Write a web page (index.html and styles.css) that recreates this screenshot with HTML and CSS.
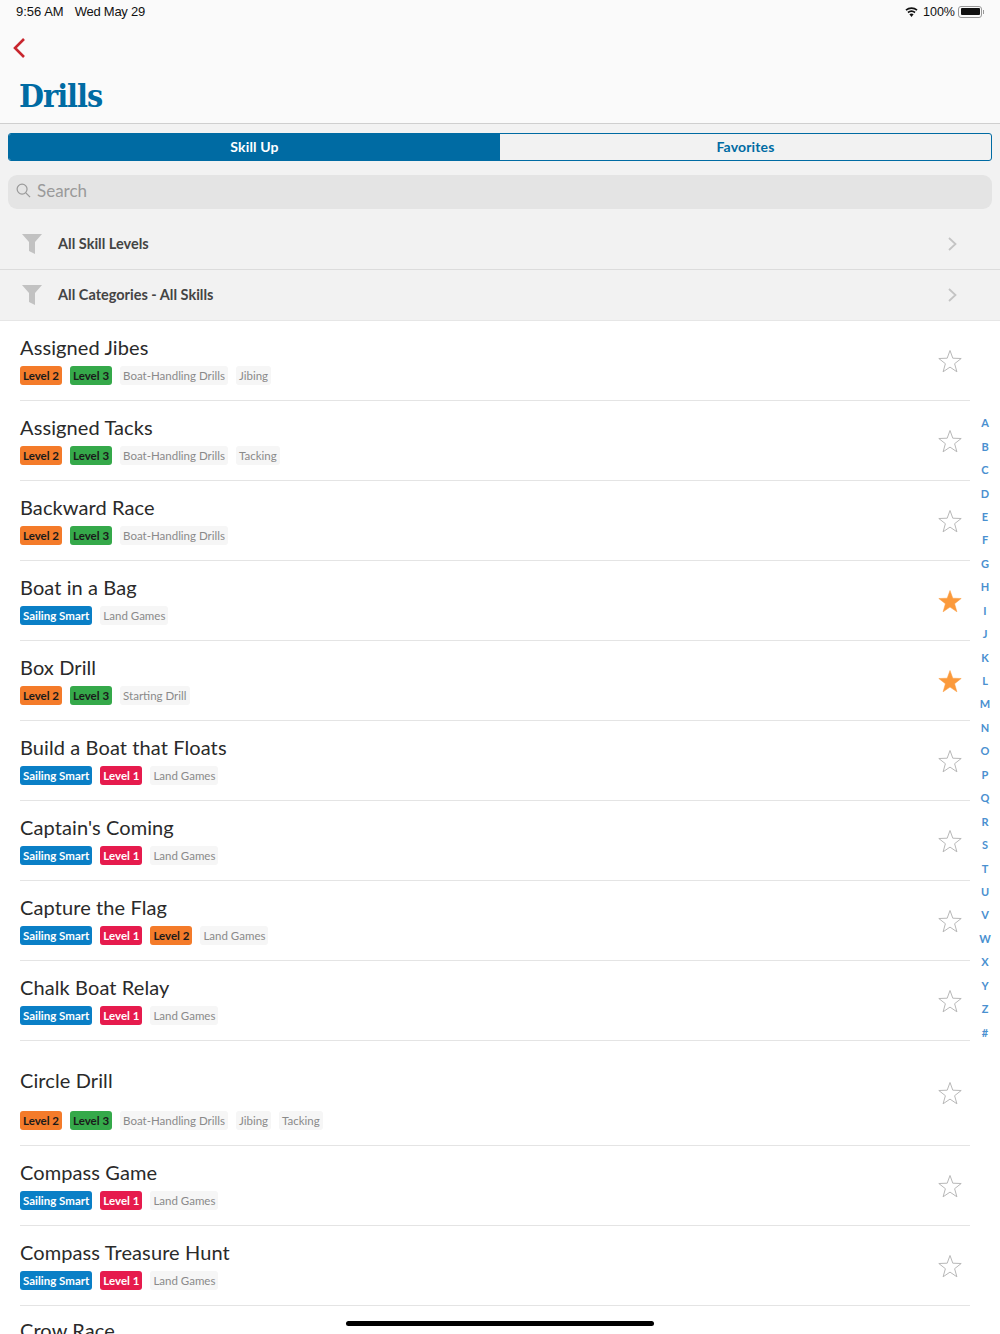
FILE: index.html
```html
<!DOCTYPE html>
<html>

<head>
    <title>Drills</title>
    <meta charset="utf-8">
    <meta name="viewport" content="width=device-width, initial-scale=1.0">
    <link rel="stylesheet" href="styles.css">
</head>

<body>
    <svg class="defs" width="0" height="0">
        <symbol id="star" viewBox="0 0 24 24">
            <path d="M12 1.500l2.800 7.700 8.400.3-6.600 5.200 2.300 8.100-6.900-4.700-6.900 4.700 2.300-8.100L.8 9.500l8.400-.3z" />
        </symbol>
        <symbol id="funnel" viewBox="0 0 20 20">
            <path d="M0 0h20l-7 8v12l-6-3V8z" />
        </symbol>
        <symbol id="chevron" viewBox="0 0 10 14">
            <path d="M2 1L8.500 7 2 13" />
        </symbol>
    </svg>

    <header class="top">
        <div class="status">
            <span class="time">9:56 AM</span>
            <span class="date">Wed May 29</span>
            <span class="status-right">
                <svg class="wifi" viewBox="0 0 16 12" width="15" height="11">
                    <path d="M8 12l-2.300-2.900a3.600 3.600 0 0 1 4.600 0z" />
                    <path d="M4.700 7.800a5.200 5.200 0 0 1 6.600 0l1.100-1.400a7 7 0 0 0-8.800 0z" />
                    <path d="M2.500 5.100a8.700 8.700 0 0 1 11 0l1.100-1.400a10.500 10.500 0 0 0-13.200 0z" />
                </svg>
                <span>100%</span>
                <span class="battery"><span class="battery-fill"></span></span>
                <span class="battery-cap"></span>
            </span>
        </div>
        <button class="back">
            <svg viewBox="0 0 14 22" width="14" height="22">
                <path d="M12 2L3 11l9 9" />
            </svg>
        </button>
        <h1>Drills</h1>
    </header>

    <section class="controls">
        <nav class="tabs">
            <button class="tab valgt">Skill Up</button>
            <button class="tab">Favorites</button>
        </nav>
        <div class="search">
            <svg viewBox="0 0 16 16" width="15" height="15">
                <circle cx="6.500" cy="6.500" r="5.300" />
                <path d="M10.500 10.500L15 15" />
            </svg>
            <span>Search</span>
        </div>
    </section>

    <section class="filters">
        <div class="filter">
            <svg class="funnel"><use href="#funnel" /></svg>
            <span class="filter-label">All Skill Levels</span>
            <svg class="chevron"><use href="#chevron" /></svg>
        </div>
        <div class="filter">
            <svg class="funnel"><use href="#funnel" /></svg>
            <span class="filter-label">All Categories - All Skills</span>
            <svg class="chevron"><use href="#chevron" /></svg>
        </div>
    </section>

    <main class="list">
        <article class="ret">
            <div class="ret-info">
                <h2>Assigned Jibes</h2>
                <div class="tags"><span class="tag orange">Level 2</span><span class="tag green">Level 3</span><span class="tag grey">Boat-Handling Drills</span><span class="tag grey">Jibing</span></div>
            </div>
            <svg class="star"><use href="#star" /></svg>
        </article>
        <article class="ret">
            <div class="ret-info">
                <h2>Assigned Tacks</h2>
                <div class="tags"><span class="tag orange">Level 2</span><span class="tag green">Level 3</span><span class="tag grey">Boat-Handling Drills</span><span class="tag grey">Tacking</span></div>
            </div>
            <svg class="star"><use href="#star" /></svg>
        </article>
        <article class="ret">
            <div class="ret-info">
                <h2>Backward Race</h2>
                <div class="tags"><span class="tag orange">Level 2</span><span class="tag green">Level 3</span><span class="tag grey">Boat-Handling Drills</span></div>
            </div>
            <svg class="star"><use href="#star" /></svg>
        </article>
        <article class="ret">
            <div class="ret-info">
                <h2>Boat in a Bag</h2>
                <div class="tags"><span class="tag blue">Sailing Smart</span><span class="tag grey">Land Games</span></div>
            </div>
            <svg class="star on"><use href="#star" /></svg>
        </article>
        <article class="ret">
            <div class="ret-info">
                <h2>Box Drill</h2>
                <div class="tags"><span class="tag orange">Level 2</span><span class="tag green">Level 3</span><span class="tag grey">Starting Drill</span></div>
            </div>
            <svg class="star on"><use href="#star" /></svg>
        </article>
        <article class="ret">
            <div class="ret-info">
                <h2>Build a Boat that Floats</h2>
                <div class="tags"><span class="tag blue">Sailing Smart</span><span class="tag red">Level 1</span><span class="tag grey">Land Games</span></div>
            </div>
            <svg class="star"><use href="#star" /></svg>
        </article>
        <article class="ret">
            <div class="ret-info">
                <h2>Captain's Coming</h2>
                <div class="tags"><span class="tag blue">Sailing Smart</span><span class="tag red">Level 1</span><span class="tag grey">Land Games</span></div>
            </div>
            <svg class="star"><use href="#star" /></svg>
        </article>
        <article class="ret">
            <div class="ret-info">
                <h2>Capture the Flag</h2>
                <div class="tags"><span class="tag blue">Sailing Smart</span><span class="tag red">Level 1</span><span class="tag orange">Level 2</span><span class="tag grey">Land Games</span></div>
            </div>
            <svg class="star"><use href="#star" /></svg>
        </article>
        <article class="ret">
            <div class="ret-info">
                <h2>Chalk Boat Relay</h2>
                <div class="tags"><span class="tag blue">Sailing Smart</span><span class="tag red">Level 1</span><span class="tag grey">Land Games</span></div>
            </div>
            <svg class="star"><use href="#star" /></svg>
        </article>
        <article class="ret ret-tall">
            <div class="ret-info">
                <h2>Circle Drill</h2>
                <div class="tags"><span class="tag orange">Level 2</span><span class="tag green">Level 3</span><span class="tag grey">Boat-Handling Drills</span><span class="tag grey">Jibing</span><span class="tag grey">Tacking</span></div>
            </div>
            <svg class="star"><use href="#star" /></svg>
        </article>
        <article class="ret">
            <div class="ret-info">
                <h2>Compass Game</h2>
                <div class="tags"><span class="tag blue">Sailing Smart</span><span class="tag red">Level 1</span><span class="tag grey">Land Games</span></div>
            </div>
            <svg class="star"><use href="#star" /></svg>
        </article>
        <article class="ret">
            <div class="ret-info">
                <h2>Compass Treasure Hunt</h2>
                <div class="tags"><span class="tag blue">Sailing Smart</span><span class="tag red">Level 1</span><span class="tag grey">Land Games</span></div>
            </div>
            <svg class="star"><use href="#star" /></svg>
        </article>
        <article class="ret ret-last">
            <div class="ret-info">
                <h2>Crow Race</h2>
            </div>
        </article>
    </main>

    <aside class="index">
        <span>A</span><span>B</span><span>C</span><span>D</span><span>E</span><span>F</span><span>G</span><span>H</span><span>I</span><span>J</span><span>K</span><span>L</span><span>M</span><span>N</span><span>O</span><span>P</span><span>Q</span><span>R</span><span>S</span><span>T</span><span>U</span><span>V</span><span>W</span><span>X</span><span>Y</span><span>Z</span><span>#</span>
    </aside>

    <div class="home-bar"></div>
</body></html>
```

FILE: styles.css
```css
* {
    box-sizing: border-box;
}

html,
body {
    margin: 0;
    height: 1334px;
    overflow: hidden;
    background: white;
    font-family: Lato, sans-serif;
}

.defs {
    position: absolute;
}

button {
    border: 0;
    padding: 0;
    background: none;
    font-family: inherit;
}

.top {
    height: 124px;
    background: #fafafa;
    border-bottom: 1px solid #cfcfcf;
}

.status {
    display: flex;
    height: 23px;
    padding: 0 16px;
    align-items: center;
    font-family: "Liberation Sans", sans-serif;
    font-size: 13px;
    color: #111;
}

.date {
    margin-left: 11px;
    letter-spacing: -.25px;
}

.status-right {
    display: flex;
    align-items: center;
    margin-left: auto;
    font-size: 12.500px;
}

.wifi {
    margin-right: 4px;
    fill: #111;
}

.battery {
    display: block;
    width: 24px;
    height: 12px;
    margin-left: 3px;
    padding: 1.500px;
    border: 1px solid #999;
    border-radius: 3px;
}

.battery-fill {
    display: block;
    height: 100%;
    background: #111;
    border-radius: 1px;
}

.battery-cap {
    width: 1px;
    height: 4px;
    margin-left: 1px;
    background: #999;
}

.back {
    display: block;
    height: 22px;
    margin: 14px 0 0 12px;
}

.back svg {
    display: block;
    fill: none;
    stroke: #c8262e;
    stroke-width: 2.600;
}

h1 {
    margin: 19px 0 0 19px;
    font-family: "DejaVu Serif", serif;
    font-size: 32px;
    line-height: 36px;
    font-weight: bold;
    font-stretch: condensed;
    letter-spacing: -1px;
    color: #006ba3;
}

.controls {
    height: 95px;
    padding: 9px 8px 0;
    background: #f2f2f2;
}

.tabs {
    display: flex;
    height: 28px;
    border: 1px solid #006ba3;
    border-radius: 3px;
    overflow: hidden;
}

.tab {
    flex: 1;
    padding-bottom: 2px;
    font-size: 14px;
    font-weight: bold;
    letter-spacing: .15px;
    color: #006ba3;
}

.valgt {
    background: #006ba3;
    color: white;
}

.search {
    display: flex;
    align-items: center;
    gap: 6px;
    height: 34px;
    margin-top: 14px;
    padding: 0 0 3px 8px;
    background: #e4e4e4;
    border-radius: 9px;
    font-size: 17px;
    color: #9a9a9a;
}

.search svg {
    fill: none;
    stroke: #9a9a9a;
    stroke-width: 1.300;
}

.filters {
    background: #f2f2f2;
    border-bottom: 1px solid #e6e6e6;
}

.filter {
    display: flex;
    align-items: center;
    height: 51px;
    padding: 0 43px 0 22px;
    border-top: 1px solid #dcdcdc;
}

.filter:first-child {
    height: 50px;
    border-top: 0;
}

.funnel {
    width: 20px;
    height: 20px;
    fill: #c2c2c2;
}

.filter-label {
    margin: 0 0 2px 16px;
    font-size: 14.500px;
    font-weight: bold;
    color: #444;
}

.chevron {
    width: 10px;
    height: 14px;
    margin-left: auto;
    fill: none;
    stroke: #c4c4c4;
    stroke-width: 1.800;
}

.list {
    padding: 0 30px 0 20px;
}

.ret {
    display: flex;
    align-items: center;
    justify-content: space-between;
    height: 80px;
    border-bottom: 1px solid #e4e4e4;
}

.ret-info {
    margin-top: -3px;
}

.ret-tall {
    height: 105px;
}

.ret-tall .ret-info {
    margin-top: 11px;
}

.ret-tall .tags {
    margin-top: 18px;
}

.ret-last {
    align-items: flex-start;
    padding-top: 14px;
}

h2 {
    margin: 0;
    font-size: 20px;
    line-height: 26px;
    font-weight: normal;
    letter-spacing: .1px;
    color: #2a2a2a;
}

.tags {
    display: flex;
    gap: 8px;
    margin-top: 6px;
}

.tag {
    height: 19px;
    padding: 0 3px;
    border-radius: 3px;
    font-size: 11.500px;
    line-height: 19px;
    font-weight: bold;
}

.orange {
    background: #f47b2a;
    color: #1a1a1a;
}

.green {
    background: #35a94a;
    color: #1a1a1a;
}

.blue {
    background: #0a7fc6;
    color: white;
}

.red {
    background: #e61b4d;
    color: white;
}

.grey {
    background: #f6f6f6;
    color: #8a8a8a;
    font-weight: normal;
}

.star {
    width: 24px;
    height: 24px;
    margin-right: 8px;
    fill: none;
    stroke: #b8b8b8;
    stroke-width: 1;
}

.star.on {
    fill: #fb9a3c;
    stroke: #fb9a3c;
    stroke-width: .5;
}

/* letter rail and home bar sit over the list */
.index {
    position: absolute;
    top: 411px;
    right: 5px;
    width: 20px;
    display: grid;
    grid-auto-rows: 23.440px;
    justify-items: center;
    align-items: center;
    font-size: 11px;
    font-weight: bold;
    color: #4a90d0;
}

.home-bar {
    position: absolute;
    left: 346px;
    bottom: 8px;
    width: 308px;
    height: 5px;
    background: black;
    border-radius: 3px;
}
```
